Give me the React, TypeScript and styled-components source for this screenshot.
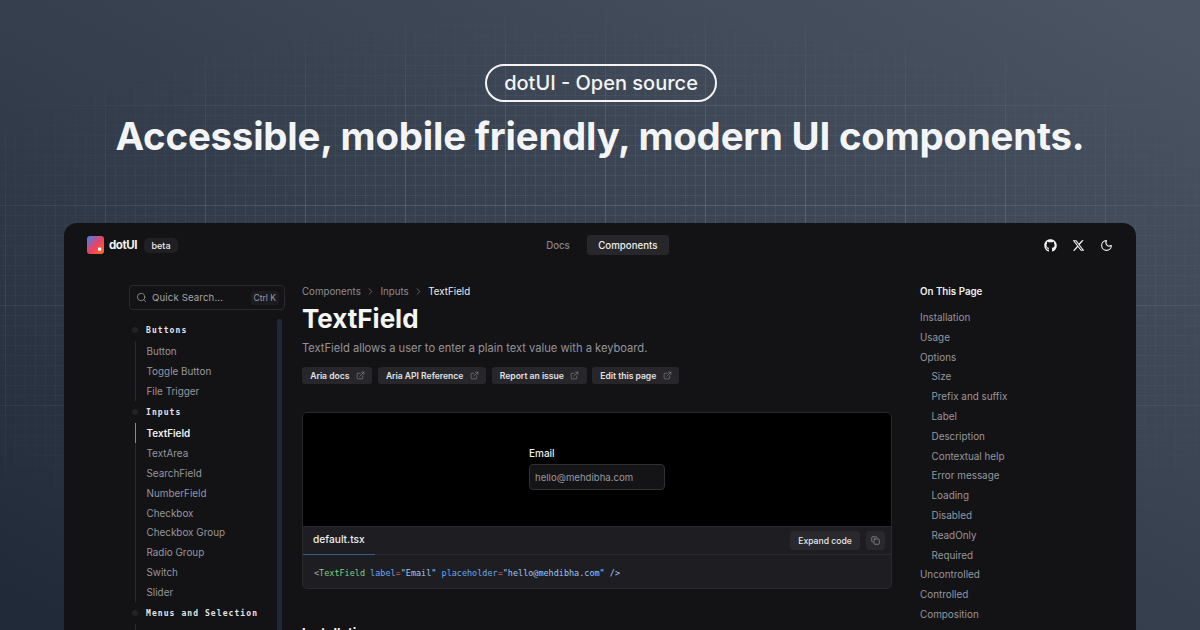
import React from "react";
import styled, { createGlobalStyle } from "styled-components";
import { Search, Moon, Copy, ChevronRight, ExternalLink } from "lucide-react";
import { FaGithub, FaXTwitter } from "react-icons/fa6";

const Global = createGlobalStyle`
  html, body { margin: 0; padding: 0; }
  body { width: 1200px; height: 630px; overflow: hidden; font-family: Inter, "Liberation Sans", sans-serif; background: #1f2937; }
  * { box-sizing: border-box; }
`;

const Page = styled.div`
  position: relative;
  width: 1200px;
  height: 630px;
  overflow: hidden;
  background: linear-gradient(to bottom left, #4b5563, #1f2937);
`;
const GridOverlay = styled.div`
  position: absolute;
  inset: 0;
  background-image:
    linear-gradient(to right, rgba(255,255,255,.09) 1px, transparent 1px),
    linear-gradient(to bottom, rgba(255,255,255,.09) 1px, transparent 1px),
    linear-gradient(to right, rgba(255,255,255,.06) 1px, transparent 1px),
    linear-gradient(to bottom, rgba(255,255,255,.06) 1px, transparent 1px);
  background-size: 100px 100px, 100px 100px, 10px 10px, 10px 10px;
  background-position: 5px 5px, 5px 5px, 5px 5px, 5px 5px;
  mask-image: radial-gradient(ellipse 790px 310px at 600px 300px, #000 45%, transparent 100%);
`;
const Hero = styled.header`
  position: relative;
  height: 223px;
  padding-top: 64px;
  display: flex;
  flex-direction: column;
  align-items: center;
`;
const Pill = styled.div`
  height: 38px;
  width: 232px;
  margin-left: 2px;
  border: 2px solid #f3f4f6;
  border-radius: 19px;
  display: flex;
  align-items: center;
  justify-content: center;
  color: #f3f4f6;
  font-size: 20px;
  font-weight: 500;
`;
const Headline = styled.h1`
  margin: 8px 0 0;
  font-size: 38.4px;
  line-height: 52px;
  font-weight: 700;
  color: #f3f4f6;
  letter-spacing: -0.2px;
  white-space: nowrap;
`;
const Window = styled.div`
  position: relative;
  width: 1072px;
  height: 420px;
  margin-left: 64px;
  background: #131316;
  border-radius: 13px 13px 0 0;
  overflow: hidden;
`;
const TopBar = styled.div`
  display: grid;
  grid-template-columns: 1fr auto 1fr;
  align-items: center;
  height: 20px;
  margin-top: 12px;
  padding: 0 23px;
`;
const Brand = styled.div`
  display: flex;
  align-items: center;
`;
const LogoMark = styled.svg`
  width: 17px;
  height: 18px;
  display: block;
`;
const BrandName = styled.span`
  margin-left: 5px;
  width: 29px;
  color: #f2f2f2;
  font-size: 11.6px;
  font-weight: 700;
  letter-spacing: -0.5px;
`;
const Beta = styled.span`
  margin-left: 6px;
  width: 34px;
  height: 15px;
  border-radius: 5px;
  background: #202024;
  color: #ececec;
  font-size: 9px;
  font-weight: 500;
  display: flex;
  align-items: center;
  justify-content: center;
`;
const Nav = styled.nav`
  display: flex;
  align-items: center;
  margin-left: 15px;
`;
const NavLink = styled.span<{ $active?: boolean }>`
  height: 20px;
  width: ${p => (p.$active ? "82px" : "auto")};
  margin-left: ${p => (p.$active ? "17px" : "0")};
  border-radius: 3px;
  background: ${p => (p.$active ? "#27272b" : "transparent")};
  color: ${p => (p.$active ? "#eeeeee" : "#85858b")};
  font-size: 9.7px;
  font-weight: 500;
  display: flex;
  align-items: center;
  justify-content: center;
`;
const IconRow = styled.div`
  justify-self: end;
  display: flex;
  align-items: center;
  gap: 15px;
  color: #f0f0f0;
`;
const Body = styled.div`
  display: grid;
  grid-template-columns: 156px 590px auto;
  column-gap: 17px;
  margin-top: 30px;
  padding-left: 65px;
`;
const SideBar = styled.aside`
  position: relative;
  height: 380px;
`;
const SearchBox = styled.div`
  height: 25px;
  border: 1px solid #2a2a2e;
  border-radius: 4px;
  display: flex;
  align-items: center;
  padding: 0 5px 0 6px;
  color: #a4a4aa;
  font-size: 9.6px;
  font-weight: 400;
  margin-bottom: 9px;
`;
const SearchLabel = styled.span`
  margin-left: 5px;
  flex: 1;
  letter-spacing: .15px;
`;
const Kbd = styled.span`
  height: 14px;
  padding: 0 3px;
  border-radius: 3px;
  background: #1c1c20;
  color: #9a9aa0;
  font-size: 8.5px;
  display: flex;
  align-items: center;
`;
const Scrollbar = styled.div`
  position: absolute;
  top: 34px;
  left: 148px;
  width: 5px;
  bottom: -20px;
  background: #1d2839;
  border-radius: 2px;
`;
const GroupTitle = styled.div`
  position: relative;
  height: 22.4px;
  padding-left: 17px;
  display: flex;
  align-items: center;
  font-family: "DejaVu Sans Mono", "Liberation Mono", monospace;
  font-size: 8px;
  font-weight: 700;
  letter-spacing: 1.08px;
  color: #e4e4e6;
  &::before {
    content: "";
    position: absolute;
    left: 3px;
    top: 8px;
    width: 6px;
    height: 6px;
    border-radius: 50%;
    background: #232327;
  }
`;
const GroupItems = styled.div`
  margin-left: 6px;
  border-left: 1px solid #29292d;
`;
const SideItem = styled.div<{ $active?: boolean }>`
  position: relative;
  height: 19.85px;
  padding-left: 10.5px;
  display: flex;
  align-items: center;
  font-size: 9.9px;
  font-weight: ${p => (p.$active ? 600 : 400)};
  color: ${p => (p.$active ? "#f0f0f0" : "#96969d")};
  ${p => p.$active && `
    &::before { content: ""; position: absolute; left: -1px; top: 0; bottom: 0; width: 1px; background: #8a8a8e; }
  `}
`;
const Main = styled.main`
  min-width: 0;
`;
const Crumbs = styled.div`
  height: 13px;
  display: flex;
  align-items: center;
  color: #8c8c93;
  font-size: 9.75px;
`;
const CrumbSep = styled.span`
  display: flex;
  margin: 0 4.3px;
  color: #85858b;
`;
const CrumbNow = styled.span`
  color: #ededed;
`;
const Title = styled.h2`
  margin: 5px 0 0;
  font-size: 26px;
  line-height: 32px;
  font-weight: 700;
  color: #f6f6f6;
`;
const Lede = styled.p`
  margin: 4.5px 0 0;
  font-size: 11.15px;
  line-height: 16px;
  color: #94949b;
`;
const Chips = styled.div`
  display: flex;
  gap: 5.3px;
  margin-top: 11.5px;
`;
const Chip = styled.span`
  height: 17px;
  padding: 0 7.6px 0 8.2px;
  background: #27272b;
  border-radius: 3px;
  display: flex;
  align-items: center;
  gap: 6.4px;
  color: #e2e2e4;
  font-size: 8.55px;
  font-weight: 600;
  white-space: nowrap;
  svg { color: #909096; }
`;
const Card = styled.section`
  margin-top: 28px;
  height: 177px;
  border: 1px solid #29292d;
  border-radius: 5px;
  overflow: hidden;
  background: #1e1e22;
`;
const Preview = styled.div`
  height: 113px;
  background: #000;
  display: flex;
  flex-direction: column;
  align-items: flex-start;
  padding: 34px 0 0 226px;
`;
const FieldLabel = styled.label`
  color: #ededed;
  font-size: 10px;
  line-height: 13px;
  font-weight: 500;
`;
const Input = styled.div`
  margin-top: 4px;
  width: 136px;
  height: 26px;
  border: 1px solid #303035;
  border-radius: 4px;
  background: #141417;
  color: #98989e;
  font-size: 9.6px;
  display: flex;
  align-items: center;
  padding-left: 5px;
`;
const TabBar = styled.div`
  height: 29px;
  border-top: 1px solid #29292d;
  border-bottom: 1px solid #29292d;
  display: flex;
  align-items: stretch;
  justify-content: space-between;
  padding-right: 6px;
`;
const Tab = styled.div`
  width: 72px;
  border-bottom: 1px solid #315f96;
  margin-bottom: -1px;
  padding: 0 0 3px 10px;
  display: flex;
  align-items: center;
  color: #ededed;
  font-size: 10.2px;
  font-weight: 500;
`;
const TabActions = styled.div`
  display: flex;
  align-items: center;
  gap: 6px;
`;
const ExpandButton = styled.span`
  width: 70px;
  height: 19px;
  border-radius: 4px;
  background: #29292d;
  color: #e6e6e8;
  font-size: 8.6px;
  font-weight: 500;
  display: flex;
  align-items: center;
  justify-content: center;
`;
const CopyButton = styled.span`
  width: 19px;
  height: 19px;
  border-radius: 4px;
  background: #29292d;
  color: #b8b8bc;
  display: flex;
  align-items: center;
  justify-content: center;
`;
const Code = styled.pre`
  margin: 0;
  padding: 11.5px 0 0 11px;
  font-family: "DejaVu Sans Mono", "Liberation Mono", monospace;
  font-size: 8.48px;
  line-height: 12px;
  color: #a8a8ae;
`;
const Tok = styled.span<{ $c: string }>`
  color: ${p => p.$c};
`;
const SectionHeading = styled.h3`
  margin: 34px 0 0;
  font-size: 13px;
  line-height: 20px;
  font-weight: 700;
  color: #f4f4f4;
`;
const Toc = styled.aside`
  margin-left: 11px;
`;
const TocTitle = styled.div`
  height: 13px;
  display: flex;
  align-items: center;
  color: #ededed;
  font-size: 9.75px;
  font-weight: 600;
  margin-bottom: 9px;
`;
const TocItem = styled.div<{ $nested?: boolean }>`
  height: 19.82px;
  display: flex;
  align-items: center;
  padding-left: ${p => (p.$nested ? "11.5px" : "0")};
  color: #96969d;
  font-size: 9.9px;
`;

const groups = [
  { title: "Buttons", items: ["Button", "Toggle Button", "File Trigger"] },
  { title: "Inputs", items: ["TextField", "TextArea", "SearchField", "NumberField", "Checkbox", "Checkbox Group", "Radio Group", "Switch", "Slider"] },
  { title: "Menus and Selection", items: [""] },
];
const chips = ["Aria docs", "Aria API Reference", "Report an issue", "Edit this page"];
const toc: [string, boolean][] = [
  ["Installation", false], ["Usage", false], ["Options", false], ["Size", true], ["Prefix and suffix", true],
  ["Label", true], ["Description", true], ["Contextual help", true], ["Error message", true], ["Loading", true],
  ["Disabled", true], ["ReadOnly", true], ["Required", true], ["Uncontrolled", false], ["Controlled", false], ["Composition", false],
];

export default function App() {
  return (
    <Page>
      <Global />
      <GridOverlay />
      <Hero>
        <Pill>dotUI - Open source</Pill>
        <Headline>Accessible, mobile friendly, modern UI components.</Headline>
      </Hero>
      <Window>
        <TopBar>
          <Brand>
            <LogoMark viewBox="0 0 17 18">
              <defs>
                <linearGradient id="lg" x1="0" y1="0" x2="1" y2="1">
                  <stop offset="0" stopColor="#3b82f6" />
                  <stop offset=".55" stopColor="#f43f5e" />
                  <stop offset="1" stopColor="#f97316" />
                </linearGradient>
              </defs>
              <rect width="17" height="18" rx="3" fill="url(#lg)" />
              <rect x="11" y="11.5" width="3.2" height="3.2" fill="#fff" rx=".6" />
            </LogoMark>
            <BrandName>dotUI</BrandName>
            <Beta>beta</Beta>
          </Brand>
          <Nav>
            <NavLink>Docs</NavLink>
            <NavLink $active>Components</NavLink>
          </Nav>
          <IconRow>
            <FaGithub size={13} />
            <FaXTwitter size={13} />
            <Moon size={13} />
          </IconRow>
        </TopBar>
        <Body>
          <SideBar>
            <SearchBox>
              <Search size={11} strokeWidth={1.6} />
              <SearchLabel>Quick Search...</SearchLabel>
              <Kbd>Ctrl K</Kbd>
            </SearchBox>
            <Scrollbar />
            {groups.map(g => (
              <div key={g.title}>
                <GroupTitle>{g.title}</GroupTitle>
                <GroupItems>
                  {g.items.map(i => (
                    <SideItem key={i} $active={i === "TextField"}>{i}</SideItem>
                  ))}
                </GroupItems>
              </div>
            ))}
          </SideBar>
          <Main>
            <Crumbs>
              Components
              <CrumbSep><ChevronRight size={11} strokeWidth={1.5} /></CrumbSep>
              Inputs
              <CrumbSep><ChevronRight size={11} strokeWidth={1.5} /></CrumbSep>
              <CrumbNow>TextField</CrumbNow>
            </Crumbs>
            <Title>TextField</Title>
            <Lede>TextField allows a user to enter a plain text value with a keyboard.</Lede>
            <Chips>
              {chips.map(c => (
                <Chip key={c}>{c}<ExternalLink size={9} strokeWidth={1.5} /></Chip>
              ))}
            </Chips>
            <Card>
              <Preview>
                <FieldLabel>Email</FieldLabel>
                <Input>hello@mehdibha.com</Input>
              </Preview>
              <TabBar>
                <Tab>default.tsx</Tab>
                <TabActions>
                  <ExpandButton>Expand code</ExpandButton>
                  <CopyButton><Copy size={9} strokeWidth={1.5} /></CopyButton>
                </TabActions>
              </TabBar>
              <Code>
                {"<"}
                <Tok $c="#79d17f">TextField</Tok>{" "}
                <Tok $c="#67a6f5">label</Tok><Tok $c="#d05a5a">=</Tok><Tok $c="#9cc6f7">"Email"</Tok>{" "}
                <Tok $c="#67a6f5">placeholder</Tok><Tok $c="#d05a5a">=</Tok><Tok $c="#9cc6f7">"hello@mehdibha.com"</Tok>{" "}
                <Tok $c="#9cc6f7">/&gt;</Tok>
              </Code>
            </Card>
            <SectionHeading>Installation</SectionHeading>
          </Main>
          <Toc>
            <TocTitle>On This Page</TocTitle>
            {toc.map(([t, n]) => (
              <TocItem key={t} $nested={n}>{t}</TocItem>
            ))}
          </Toc>
        </Body>
      </Window>
    </Page>
  );
}
